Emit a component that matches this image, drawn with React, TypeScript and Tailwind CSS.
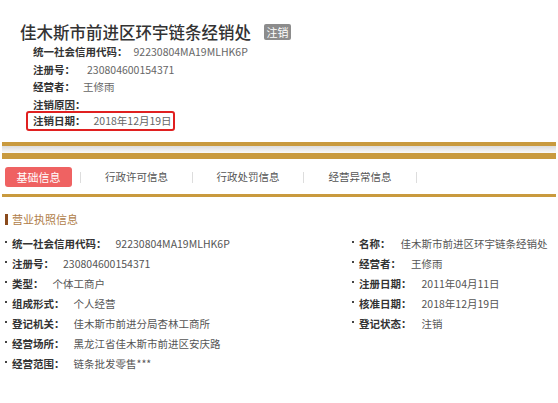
import React from "react";

const font = { fontFamily: '"Noto Sans CJK SC", "Noto Sans", sans-serif' };

function Dot() {
  return <span className="inline-block w-[2px] h-[2px] bg-[#444] mr-[5px] mb-[4px]" />;
}

function Row({ label, value, gap = "ml-[9px]" }: { label: string; value: string; gap?: string }) {
  return (
    <div className="flex items-center h-[20px] whitespace-nowrap">
      <Dot />
      <span className="font-bold text-[#333]">{label}</span>
      <span className={`${gap} text-[#555]`}>{value}</span>
    </div>
  );
}

export default function App() {
  return (
    <div className="w-[558px] h-[403px] bg-white overflow-hidden text-[10.5px]" style={font}>
      {/* header */}
      <div className="pt-[21px] pl-[20px] flex items-center h-[43px] box-border">
        <span className="text-[16.5px] leading-[22px] font-medium text-[#333]">佳木斯市前进区环宇链条经销处</span>
        <span className="ml-[13px] w-[27px] h-[16px] bg-[#8c8c8c] text-white text-[11px] leading-[16px] text-center rounded-[2px]">注销</span>
      </div>
      <div className="pl-[33px] leading-[17.5px]">
        <div className="h-[17.5px] flex items-center whitespace-nowrap">
          <span className="font-bold text-[#333]">统一社会信用代码：</span>
          <span className="ml-[6px] text-[#666]">92230804MA19MLHK6P</span>
        </div>
        <div className="h-[17.5px] flex items-center whitespace-nowrap">
          <span className="font-bold text-[#333]">注册号：</span>
          <span className="ml-[12px] text-[#666]">230804600154371</span>
        </div>
        <div className="h-[17.5px] flex items-center whitespace-nowrap">
          <span className="font-bold text-[#333]">经营者：</span>
          <span className="ml-[8px] text-[#666]">王修雨</span>
        </div>
        <div className="h-[17.5px] flex items-center whitespace-nowrap">
          <span className="font-bold text-[#333]">注销原因：</span>
        </div>
      </div>
      <div className="ml-[26px] mt-[-2px] w-[149px] h-[20px] border-2 border-[#e02020] rounded-[3px] flex items-center pl-[5px] whitespace-nowrap">
        <span className="font-bold text-[#333]">注销日期：</span>
        <span className="ml-[8px] text-[#666]">2018年12月19日</span>
      </div>

      {/* gold bars */}
      <div className="mx-[2px] mt-[11px]">
        <div className="h-[4px] bg-[#c99a3e]" />
        <div className="h-[7px] bg-gradient-to-b from-[#dcdcdc] to-[#fafafa]" />
        <div className="h-[6px] bg-[#c99a3e]" />
      </div>

      {/* tabs */}
      <div className="flex items-center mt-[8px] h-[20px]">
        <div className="ml-[5px] w-[67px] h-[20px] rounded-[3px] bg-[#ef6262] text-white text-[11px] leading-[20px] text-center">基础信息</div>
        <div className="ml-[8px] w-px h-[11px] bg-[#ddd]" />
        <div className="w-[111px] text-center text-[#555] text-[10.5px]">行政许可信息</div>
        <div className="w-px h-[11px] bg-[#ddd]" />
        <div className="w-[110px] text-center text-[#555] text-[10.5px]">行政处罚信息</div>
        <div className="w-px h-[11px] bg-[#ddd]" />
        <div className="w-[112px] text-center text-[#555] text-[10.5px]">经营异常信息</div>
        <div className="w-px h-[11px] bg-[#ddd]" />
      </div>
      <div className="mx-[2px] mt-[7px] h-[3px] bg-[#c99a3e]" />

      {/* section */}
      <div className="flex items-center mt-[14px] h-[16px] pl-[5px]">
        <span className="w-[3px] h-[11px] bg-[#8a4a1c]" />
        <span className="ml-[4px] text-[11px] text-[#b07d48]">营业执照信息</span>
      </div>
      <div className="flex mt-[7px] pl-[5px]">
        <div className="w-[347px]">
          <Row label="统一社会信用代码：" value="92230804MA19MLHK6P" />
          <Row label="注册号：" value="230804600154371" />
          <Row label="类型：" value="个体工商户" />
          <Row label="组成形式：" value="个人经营" />
          <Row label="登记机关：" value="佳木斯市前进分局杏林工商所" />
          <Row label="经营场所：" value="黑龙江省佳木斯市前进区安庆路" />
          <Row label="经营范围：" value="链条批发零售***" />
        </div>
        <div className="flex-1">
          <Row label="名称：" value="佳木斯市前进区环宇链条经销处" gap="ml-[10px]" />
          <Row label="经营者：" value="王修雨" gap="ml-[10px]" />
          <Row label="注册日期：" value="2011年04月11日" gap="ml-[10px]" />
          <Row label="核准日期：" value="2018年12月19日" gap="ml-[10px]" />
          <Row label="登记状态：" value="注销" gap="ml-[10px]" />
        </div>
      </div>
    </div>
  );
}
